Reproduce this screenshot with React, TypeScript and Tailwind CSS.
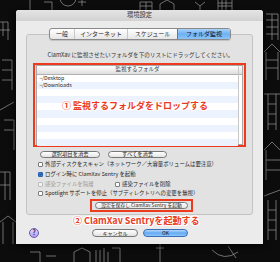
import React from "react";

function Wallpaper() {
  return (
    <svg className="absolute inset-0" width="280" height="262" viewBox="0 0 280 262">
      <g fill="none" stroke="#9a9a9a" strokeWidth="0.7">
        {/* top strip */}
        <circle cx="68" cy="-2" r="8" />
        <path d="M30 0 L30 10 M44 2 L52 2 L52 10" />
        <path d="M78 2 L86 2 M82 0 L82 6" />
        <path d="M140 10 L140 2 L152 2 L152 10 M146 2 L146 10 M140 6 L152 6" />
        <path d="M160 10 L160 4 L167 0 L174 4 L174 10" />
        <path d="M195 2 L200 6 L205 2 M200 6 L200 10" />
        <path d="M218 10 L218 0 M232 0 L232 10 M218 3 L232 3 M218 6 L232 6 M222 0 L222 10 M226 0 L226 10" />
        {/* left side */}
        <path d="M0 22 L8 22 L8 40 M3 22 L3 36 M0 30 L10 30" />
        <path d="M2 60 L12 60 L12 90 M2 70 L12 70 M2 80 L12 80" />
        <path d="M0 110 L14 102 M4 120 L14 120 L14 150 M4 130 L14 130" />
        <path d="M0 172 L10 172 L10 200 M5 172 L5 200 M0 185 L10 185" />
        <path d="M0 222 L8 216 L16 222 M3 222 L3 244 M13 222 L13 244" />
        {/* right side */}
        <path d="M266 14 L278 14 L278 40 M266 20 L278 20 M266 27 L278 27 M266 34 L278 34 M272 14 L272 40" />
        <path d="M264 52 L272 44 L280 52 M266 52 L266 80 M278 52 L278 80 M266 60 L278 60 M266 68 L278 68" />
        <path d="M264 94 L280 94 M268 94 L268 130 M276 94 L276 130 M268 104 L276 104 M268 114 L276 114 M268 124 L276 124" />
        <path d="M264 150 L272 142 L280 150 M266 150 L266 180 M266 160 L280 160 M266 170 L280 170" />
        <path d="M264 196 L280 190 M268 200 L268 240 M276 200 L276 240 M268 210 L276 210 M268 220 L276 220 M268 230 L276 230" />
        {/* bottom */}
        <path d="M74 262 L74 252 L82 248 L90 252 L90 262" />
        <path d="M96 262 L96 250 M100 250 L100 262 M104 248 L104 262 M108 252 L108 262 M112 248 L120 248 L120 262" />
        <path d="M160 244 L160 262 M156 248 L164 248" />
        <path d="M212 250 Q224 262 238 252" />
        <path d="M228 246 L236 258" />
        <path d="M30 252 L40 252 L40 262 M46 256 L56 256" />
      </g>
    </svg>
  );
}

function Check({ checked = false, disabled = false }: { checked?: boolean; disabled?: boolean }) {
  return (
    <div
      className={
        "w-[5px] h-[5px] rounded-[1px] border flex items-center justify-center shrink-0 " +
        (checked
          ? "bg-[#3b82e8] border-[#2a5fb0]"
          : disabled
          ? "bg-[#f2f2f2] border-[#bcbcbc]"
          : "bg-white border-[#7a7a7a]")
      }
    >
      {checked && (
        <svg width="5" height="5" viewBox="0 0 5 5">
          <path d="M0.8 2.4 L2 3.8 L4.4 0.6" fill="none" stroke="#111" strokeWidth="1" />
        </svg>
      )}
    </div>
  );
}

const outline =
  "[text-shadow:1px_0_0_#fff,-1px_0_0_#fff,0_1px_0_#fff,0_-1px_0_#fff,1px_1px_0_#fff,-1px_-1px_0_#fff,1px_-1px_0_#fff,-1px_1px_0_#fff]";

export default function App() {
  const rows = Array.from({ length: 10 });
  return (
    <div className="relative w-[280px] h-[262px] overflow-hidden bg-[#0c0c0c] font-['Noto_Sans_CJK_JP','Liberation_Sans',sans-serif] text-[#222]">
      <Wallpaper />
      <div className="relative ml-[16px] mt-[10px] w-[247px] h-[234px] flex flex-col bg-[#ebebeb] rounded-t-[3px] shadow-[0_2px_6px_rgba(0,0,0,0.8)]">
        {/* title bar */}
        <div className="h-[11px] shrink-0 rounded-t-[3px] bg-gradient-to-b from-[#e4e4e4] to-[#d2d2d2] flex items-center justify-center text-[6.3px] leading-none text-[#333]">
          環境設定
        </div>
        {/* group box */}
        <div className="px-[10px] pt-[13px]">
          <div className="h-[181px] border border-[#c3c3c3] rounded-[3px] bg-[#e2e2e2] flex flex-col">
            {/* tabs */}
            <div className="-mt-[7px] h-[12px] flex justify-center pl-[1px]">
              <div className="flex h-[12px] rounded-[3px] border border-[#8a8a8a] bg-gradient-to-b from-white to-[#e6e6e6] text-[6px] leading-none overflow-hidden shadow-[0_1px_1px_rgba(0,0,0,0.15)]">
                <div className="w-[25px] flex items-center justify-center border-r border-[#c8c8c8]">一般</div>
                <div className="w-[53px] flex items-center justify-center border-r border-[#c8c8c8]">インターネット</div>
                <div className="w-[49px] flex items-center justify-center">スケジュール</div>
                <div className="w-[53px] flex items-center justify-center bg-gradient-to-b from-[#a9d2fb] via-[#6cb0f4] to-[#8cc4fa] border-l border-[#3d7fd0] text-[#112]">
                  フォルダ監視
                </div>
              </div>
            </div>
            {/* instruction */}
            <div className="mt-[11px] h-[8px] leading-[8px] text-[5.6px] text-center text-[#333] whitespace-nowrap pl-[2px]">
              ClamXav に監視させたいフォルダを下のリストにドラッグしてください。
            </div>
            {/* red box with list */}
            <div className="mt-[4px] ml-[6px] w-[213px] h-[84px] border-2 border-[#ee3a1d] px-[1px] flex">
              <div className="flex-1 bg-white border border-[#a8a8a8] flex">
                <div className="flex-1 flex flex-col">
                  <div className="h-[9px] shrink-0 bg-gradient-to-b from-white to-[#dedede] border-b border-[#b0b0b0] flex items-center justify-center text-[5.5px] leading-none text-[#333]">
                    監視するフォルダ
                  </div>
                  {rows.map((_, i) => (
                    <div
                      key={i}
                      className={
                        "h-[7.1px] shrink-0 flex items-center pl-[2px] text-[5.3px] leading-none " +
                        (i % 2 === 1 ? "bg-[#edf3fe]" : "bg-white")
                      }
                    >
                      {i === 0 ? "~/Desktop" : i === 1 ? "~/Downloads" : ""}
                    </div>
                  ))}
                </div>
                <div className="w-[4px] border-l border-[#c8c8c8] flex flex-col">
                  <div className="h-[9px] bg-gradient-to-b from-white to-[#dedede] border-b border-[#b0b0b0]" />
                </div>
              </div>
            </div>
            {/* buttons */}
            <div className="mt-[4px] h-[7px] flex pl-[13px] gap-[8px] text-[5.3px] leading-none">
              <div className="w-[60px] h-[7px] rounded-full border border-[#777] bg-gradient-to-b from-white to-[#e4e4e4] flex items-center justify-center">
                選択項目を消去
              </div>
              <div className="w-[59px] h-[7px] rounded-full border border-[#777] bg-gradient-to-b from-white to-[#e4e4e4] flex items-center justify-center">
                すべてを消去
              </div>
            </div>
            {/* checkboxes */}
            <div className="mt-[2px] pl-[11px] flex flex-col text-[5.4px] leading-none">
              <div className="h-[9.7px] flex items-center gap-[2px]">
                <Check />
                <span>外部ディスクをスキャン（ネットワーク／大容量ボリュームは要注意）</span>
              </div>
              <div className="h-[9.7px] flex items-center gap-[2px]">
                <Check checked />
                <span>ログイン時に ClamXav Sentry を起動</span>
              </div>
              <div className="h-[9.7px] flex items-center">
                <Check disabled />
                <span className="ml-[2px] w-[70px] text-[#9a9a9a]">感染ファイルを隔離</span>
                <Check />
                <span className="ml-[2px]">感染ファイルを削除</span>
              </div>
              <div className="h-[9.7px] flex items-center gap-[2px]">
                <Check />
                <span>Spotlight サポートを停止（サブディレクトリへの変更を無視）</span>
              </div>
            </div>
            {/* save button in red box */}
            <div className="flex pl-[63px]">
              <div className="w-[103px] h-[13px] border-2 border-[#ee3a1d] flex items-center justify-center">
                <div className="w-[93px] h-[7px] rounded-full border border-[#777] bg-gradient-to-b from-white to-[#e4e4e4] flex items-center justify-center text-[4.8px] leading-none whitespace-nowrap">
                  設定を保存し ClamXav Sentry を起動
                </div>
              </div>
            </div>
          </div>
        </div>
        {/* bottom row */}
        <div className="mt-[12px] h-[11px] flex items-center pl-[13px]">
          <div className="w-[10px] h-[10px] rounded-full border border-[#6a5aa8] bg-gradient-to-b from-[#e6dcff] to-[#b09ae8] flex items-center justify-center text-[7px] font-bold leading-none text-[#2a1d60]">
            ?
          </div>
          <div className="ml-[53px] w-[46px] h-[8px] rounded-full border border-[#777] bg-gradient-to-b from-white to-[#e2e2e2] flex items-center justify-center text-[5px] leading-none">
            キャンセル
          </div>
          <div className="ml-[5px] w-[45px] h-[8px] rounded-full border border-[#3a6fb8] bg-gradient-to-b from-[#b4d8fc] via-[#64a9f2] to-[#8ec6fb] flex items-center justify-center text-[5px] leading-none text-[#112]">
            OK
          </div>
        </div>
      </div>
      {/* annotations */}
      <div
        className={
          "absolute left-[62px] top-[100px] text-[9px] leading-[12px] font-bold text-[#ea3b1e] whitespace-nowrap " + outline
        }
      >
        ① 監視するフォルダをドロップする
      </div>
      <div
        className={
          "absolute left-[73px] top-[215px] text-[9px] leading-[12px] font-bold text-[#ea3b1e] whitespace-nowrap " + outline
        }
      >
        ② ClamXav Sentryを起動する
      </div>
    </div>
  );
}
